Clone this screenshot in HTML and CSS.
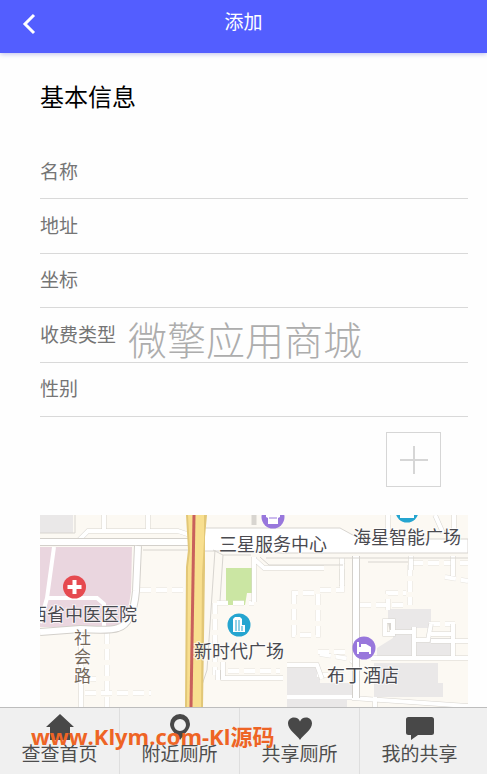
FILE: index.html
```html
<!DOCTYPE html>
<html lang="zh-CN">
<head>
<meta charset="utf-8">
<meta name="viewport" content="width=device-width, initial-scale=1">
<title>添加</title>
<link rel="stylesheet" href="styles.css">
</head>
<body>
<header class="topbar">
  <button class="back" type="button" aria-label="返回">
    <svg viewBox="0 0 14 22" width="14" height="22"><path d="M12 2 3 11l9 9" fill="none" stroke="currentColor" stroke-width="3"/></svg>
  </button>
  <h1 class="title">添加</h1>
</header>

<main class="content">
  <h2 class="section-title">基本信息</h2>
  <form class="form">
    <div class="fields">
      <div class="field"><label for="name">名称</label><input id="name" type="text"></div>
      <div class="field"><label for="address">地址</label><input id="address" type="text"></div>
      <div class="field"><label for="coords">坐标</label><input id="coords" type="text"></div>
      <div class="field"><label for="fee">收费类型</label><input id="fee" type="text"></div>
      <div class="field"><label for="gender">性别</label><input id="gender" type="text"></div>
      <span class="watermark">微擎应用商城</span>
    </div>
    <button class="add" type="button" aria-label="添加图片">
      <svg viewBox="0 0 28 28" width="28" height="28"><path d="M14 0v28M0 14h28" fill="none" stroke="currentColor" stroke-width="2"/></svg>
    </button>
  </form>

  <svg class="map" viewBox="0 0 428 192" preserveAspectRatio="xMidYMin slice" role="img" aria-label="地图">
    <rect class="land" width="428" height="192"/>
    <!-- building blocks -->
    <path class="block" d="M0 0h33v18H0zM63 17l12-3h52l8 4zM348 94h43v19h-18v29h-36v-9l16-10v-14h-5zM373 123h42v18h-42zM334 148h64v20h5v14h-69zM247 149h25l8 6v25h-33zM247 171h60v21h-60zM280 168h32v17h-32z"/>
    <path class="hospital" d="M0 32h92l-1 45-4 25-12 10H0z"/>
    <path class="park" d="M186 53h27v25h-6l-2 12h-19z"/>
    <!-- dashed footpaths -->
    <g class="path-case">
      <path d="M100 75h46M67 118v74M45 164h16M45 178h66M177 88h37M175 88v72M254 78v42h24V78zM188 156h52M280 75h22V48M320 90h48M348 95V78h18M370 50v40M372 48h56M405 62l23 4M280 139l30 5 8 8M278 137h32M389 109h26M277 160h30"/>
    </g>
    <g class="path">
      <path d="M100 75h46M67 118v74M45 164h16M45 178h66M177 88h37M175 88v72M254 78v42h24V78zM188 156h52M280 75h22V48M320 90h48M348 95V78h18M370 50v40M372 48h56M405 62l23 4M280 139l30 5 8 8M278 137h32M389 109h26M277 160h30"/>
    </g>
    <!-- local roads -->
    <g class="road-case">
      <path d="M64 0v18M108 0v14M38 26l10-10h90l12 4M41 118v74M214 42v45M214 44l10 9h60M302 43v28M348 0v22M414 0v22M395 0l8 18M331 143h97M374 112v31M350 117h24M350 105l3 15M353 106v13h-8v-13zM374 125h14l3-16M391 119h24M413 109v34M391 126h37M312 183l116 8M335 182v10M371 41v14M413 41v20M183 147v16h60M247 150h30l5 14M178 155v10M214 0v10"/>
    </g>
    <g class="road">
      <path d="M64 0v18M108 0v14M38 26l10-10h90l12 4M41 118v74M214 42v45M214 44l10 9h60M302 43v28M348 0v22M414 0v22M395 0l8 18M331 143h97M374 112v31M353 106v13h-8v-13zM374 125h14l3-16M391 119h24M413 109v34M391 126h37M312 183l116 8M335 182v10M371 41v14M413 41v20M183 147v16h60M247 150h30l5 14M178 155v10"/>
      <path d="M14 32 7 83 0 108M7 83h50l7 6v26M247 182h65M350 117h24"/>
    </g>
    <path class="main-case" d="M0 27h148M98 31l-2 45q-3 33-18 37-8 3-38 1L0 117M316 41v142"/>
    <path class="main-road" d="M0 27h148M98 31l-2 45q-3 33-18 37-8 3-38 1L0 117M316 41v142"/>
    <path class="main-area" d="M162 13h138l20 11h108v14H240l-24-2h-54z"/>
    <path class="road-line" d="M35 0v18H0M103 35h45M175 35l-8 120-5 15M183 40l-3 46M173 35l10 5h28M220 42l9 8h74M226 43h202M328 47h40"/>
    <!-- avenue -->
    <path class="avenue-edge" d="M146 0h21l-2 22v30l-2 140h-18l1-140 2-17z"/>
    <path class="avenue" d="M148 0h16v25l-2 35-1 132h-14l1-140 2-16z"/>
    <path class="transit" d="M154 0l-3 192"/>
    <!-- markers -->
    <g transform="translate(34.5 72)">
      <circle class="pin-red" r="11.5"/><path class="pin-mark" d="M-2-7h4v5h5v4H2v5h-4V2h-5v-4h5z"/>
    </g>
    <g transform="translate(199 110)">
      <circle class="pin-blue" r="11.5"/><path class="pin-mark" d="M-6-6l2-2h5l2 2V0h3v7H-6z"/><path class="pin-slots" d="M-3-5V6M0-5V6M3 1v5"/>
    </g>
    <g transform="translate(324 133)">
      <circle class="pin-purple" r="11.5"/><path class="pin-mark" d="M-7-6h2v5h2v-3h5l5 3v7H5V4H-5v2h-2z"/>
    </g>
    <g transform="translate(233 2)">
      <circle class="pin-purple" r="11.5"/><path class="pin-mark" d="M-7-3H7v3L5 1v6H-5V1l-2-1z"/><path class="pin-fold" d="M-4 1h8"/>
    </g>
    <g transform="translate(367 -4)">
      <circle class="pin-blue" r="11.5"/><path class="pin-mark" d="M-7 4h2V1h3v3h1V0h3v4h1V1h3v3h1v3H-7z"/>
    </g>
    <!-- place names -->
    <g class="place">
      <text x="-11" y="106">西省中医医院</text>
      <text x="179" y="36">三星服务中心</text>
      <text x="313" y="29">海星智能广场</text>
      <text x="154" y="143">新时代广场</text>
      <text x="287" y="167">布丁酒店</text>
    </g>
    <g class="street">
      <text x="34" y="129">社</text><text x="34" y="148">会</text><text x="34" y="167">路</text>
    </g>
  </svg>
</main>

<nav class="tabs">
  <a class="tab" href="#home">
    <svg viewBox="0 0 28 26" width="28" height="26"><path d="M14 0 28 13h-4v13H4V13H0z"/></svg>
    <span>查查首页</span>
  </a>
  <a class="tab" href="#nearby">
    <svg viewBox="0 0 28 26" width="28" height="26"><path fill-rule="evenodd" d="M14 0a10 10 0 0 1 10 10c0 5-4 8-10 16C8 18 4 15 4 10A10 10 0 0 1 14 0zm0 5a6 6 0 1 0 0 12 6 6 0 0 0 0-12z"/></svg>
    <span>附近厕所</span>
  </a>
  <a class="tab" href="#shared">
    <svg viewBox="0 0 28 26" width="28" height="26"><path d="M14 26C11 21 2 16 2 9.500 2 6 4.500 3.500 8 3.500c3 0 5 1.500 6 4 1-2.500 3-4 6-4 3.500 0 6 2.500 6 6C26 16 17 21 14 26z"/></svg>
    <span>共享厕所</span>
  </a>
  <a class="tab" href="#mine">
    <svg viewBox="0 0 28 26" width="28" height="26"><path d="M2.500 3h23Q28 3 28 5.500v13q0 2.500-2.500 2.500H12l-7 5v-5H2.500Q0 21 0 18.500v-13Q0 3 2.500 3z"/></svg>
    <span>我的共享</span>
  </a>
  <span class="site-mark">www.Klym.com-Kl源码</span>
</nav>
</body>
</html>
```
FILE: styles.css
```css
* { box-sizing: border-box; }

body {
  margin: 0;
  min-height: 100vh;
  display: flex;
  flex-direction: column;
  background: #fefefe;
  color: #111;
  font-family: "Noto Sans CJK SC", sans-serif;
}

button {
  padding: 0;
  border: 0;
  background: none;
  font: inherit;
}

.topbar {
  display: grid;
  grid-template-columns: 56px 1fr 56px;
  height: 53px;
  padding-bottom: 8px;
  background: #535eff;
  color: #fff;
  box-shadow: 0 1px 5px rgba(60, 70, 200, 0.35);
}

.back {
  display: flex;
  align-items: center;
  justify-content: center;
  padding-top: 2px;
  padding-left: 2px;
  color: #fff;
}

.title {
  margin: 0;
  font-size: 19px;
  font-weight: 400;
  line-height: 42px;
  text-align: center;
}

.content {
  flex: 1;
  display: flex;
  flex-direction: column;
  padding: 23px 19px 0 40px;
}

.section-title {
  margin: 0 0 29px;
  font-size: 24px;
  font-weight: 400;
  line-height: 40px;
  color: #000;
}

.form {
  display: flex;
  flex-direction: column;
}

.fields {
  position: relative;
  display: grid;
  grid-auto-rows: 1fr;
  height: 272px;
}

.field {
  display: flex;
  align-items: center;
  gap: 12px;
  padding-bottom: 2px;
  border-bottom: 1px solid #d9d9d9;
  color: #757575;
  font-size: 19px;
  line-height: 28px;
}

.field input {
  flex: 1;
  min-width: 0;
  height: 40px;
  padding: 0;
  border: 0;
  outline: 0;
  background: none;
  color: #333;
  font: inherit;
}

.watermark {
  position: absolute;
  top: 165px;
  left: 88px;
  color: #adadad;
  font-size: 39px;
  font-weight: 300;
  line-height: 56px;
  pointer-events: none;
}

.add {
  display: flex;
  align-items: center;
  justify-content: center;
  align-self: flex-end;
  width: 55px;
  height: 55px;
  margin: 15px 27px 28px 0;
  border: 1px solid #d6d6d6;
  color: #d6d6d6;
}

.map {
  display: block;
  flex: 1 0 192px;
  width: 100%;
  height: 192px;
}

.land { fill: #fcf9f3; }
.block { fill: #eae8e8; }
.hospital { fill: #ead6df; }
.park { fill: #cbe6a3; }
.path-case, .path, .road-case, .road, .road-line, .main-case, .main-road, .transit, .pin-slots, .pin-fold { fill: none; }
.path-case { stroke: #e6e3de; stroke-width: 5; stroke-dasharray: 11 5; }
.path { stroke: #fff; stroke-width: 4; stroke-dasharray: 11 5; }
.road-case { stroke: #d8d5d0; stroke-width: 5; }
.road { stroke: #fff; stroke-width: 4; }
.road-line { stroke: #d8d5d0; stroke-width: 1; }
.main-case { stroke: #d3d0cb; stroke-width: 8; }
.main-road { stroke: #fff; stroke-width: 6; }
.main-area { fill: #fff; stroke: #d8d5d0; stroke-width: 1; }
.avenue-edge { fill: #e2c777; }
.avenue { fill: #f8df8f; }
.transit { stroke: #c9605c; stroke-width: 3; }
.pin-red { fill: #e64a50; }
.pin-blue { fill: #25a5d0; }
.pin-purple { fill: #9877dc; }
.pin-mark { fill: #fff; }
.pin-slots { stroke: #25a5d0; stroke-width: 1; }
.pin-fold { stroke: #9877dc; stroke-width: 1; }

.place {
  fill: #4a4a50;
  stroke: #fff;
  stroke-width: 2px;
  stroke-opacity: 0.7;
  paint-order: stroke;
  font-size: 18px;
}

.street {
  fill: #75695c;
  stroke: #fff;
  stroke-width: 2px;
  stroke-opacity: 0.7;
  paint-order: stroke;
  font-size: 17px;
}

.tabs {
  position: relative;
  display: grid;
  grid-template-columns: repeat(4, 1fr);
  height: 67px;
  padding-right: 7px;
  border-top: 1px solid #bdbdbd;
  background: #f0f0f0;
}

.tab {
  display: flex;
  flex-direction: column;
  align-items: center;
  padding-top: 6px;
  border-right: 1px solid #dedede;
  color: #4d4d4d;
  font-size: 19px;
  line-height: 26px;
  text-decoration: none;
}

.tab:nth-child(4) { border-right-color: transparent; }
.tab svg { fill: #484848; }

.site-mark {
  position: absolute;
  top: 12px;
  left: 31px;
  color: #ee6425;
  font-family: "Open Sans", "Noto Sans CJK SC", sans-serif;
  font-size: 22px;
  font-weight: 700;
  line-height: 32px;
  white-space: nowrap;
  pointer-events: none;
}
```
